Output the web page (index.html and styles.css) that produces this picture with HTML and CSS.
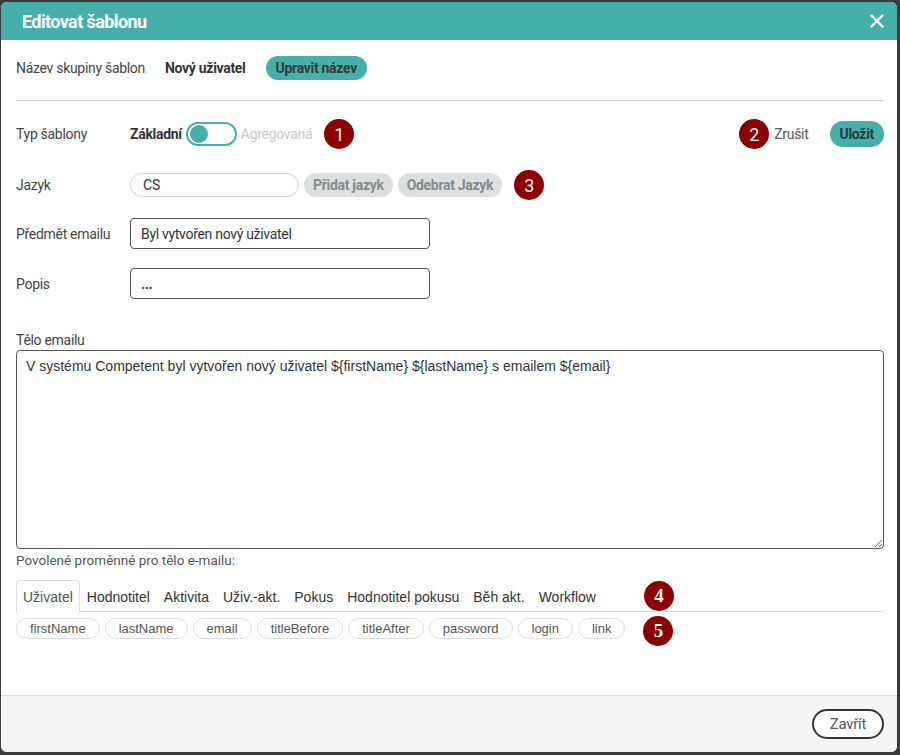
FILE: index.html
```html
<!DOCTYPE html>
<html lang="cs">
<head>
<meta charset="utf-8">
<title>Editovat šablonu</title>
<link rel="stylesheet" href="styles.css">
</head>
<body>
<div class="modal">
  <div class="modal-header">
    <h1 class="modal-title">Editovat šablonu</h1>
    <button class="close-btn" aria-label="Zavřít">
      <svg width="14" height="14" viewBox="0 0 14 14"><path d="M1.5 1.5 L12.5 12.5 M12.5 1.5 L1.5 12.5" stroke="#fff" stroke-width="2.4" stroke-linecap="round"/></svg>
    </button>
  </div>
  <div class="modal-body">
    <div class="row row-name">
      <span class="label-inline">Název skupiny šablon</span>
      <span class="name-value">Nový uživatel</span>
      <button class="btn-teal">Upravit název</button>
    </div>
    <div class="divider"></div>
    <div class="row row-type">
      <span class="label">Typ šablony</span>
      <span class="type-on">Základní</span>
      <span class="toggle"><span class="knob"></span></span>
      <span class="type-off">Agregovaná</span>
      <span class="badge badge-1">1</span>
      <div class="actions">
        <span class="badge">2</span>
        <span class="link-cancel">Zrušit</span>
        <button class="btn-teal btn-save">Uložit</button>
      </div>
    </div>
    <div class="row row-lang">
      <span class="label">Jazyk</span>
      <input class="pill-input" value="CS">
      <button class="btn-gray">Přidat jazyk</button>
      <button class="btn-gray">Odebrat Jazyk</button>
      <span class="badge badge-3">3</span>
    </div>
    <div class="row row-field row-subject">
      <span class="label">Předmět emailu</span>
      <input class="text-input" value="Byl vytvořen nový uživatel">
    </div>
    <div class="row row-field row-desc">
      <span class="label">Popis</span>
      <input class="text-input bold" value="...">
    </div>
    <div class="body-label">Tělo emailu</div>
    <textarea class="body-text">V systému Competent byl vytvořen nový uživatel ${firstName} ${lastName} s emailem ${email}</textarea>
    <div class="vars-label">Povolené proměnné pro tělo e-mailu:</div>
    <div class="tabs">
      <span class="tab active">Uživatel</span>
      <span class="tab">Hodnotitel</span>
      <span class="tab">Aktivita</span>
      <span class="tab">Uživ.-akt.</span>
      <span class="tab">Pokus</span>
      <span class="tab">Hodnotitel pokusu</span>
      <span class="tab">Běh akt.</span>
      <span class="tab">Workflow</span>
      <span class="badge badge-serif badge-4">4</span>
    </div>
    <div class="chips">
      <span class="chip">firstName</span>
      <span class="chip">lastName</span>
      <span class="chip">email</span>
      <span class="chip">titleBefore</span>
      <span class="chip">titleAfter</span>
      <span class="chip">password</span>
      <span class="chip">login</span>
      <span class="chip">link</span>
      <span class="badge badge-serif badge-5">5</span>
    </div>
  </div>
  <div class="modal-footer">
    <button class="btn-outline">Zavřít</button>
  </div>
</div>
</body>
</html>
```
FILE: styles.css
```css
* { box-sizing: border-box; }
html, body { height: 100%; }
body {
  margin: 0;
  background: #3a3d3d;
  padding: 2px 3px 3px 1px;
  font-family: Roboto, "Noto Sans", sans-serif;
  font-size: 14px;
  letter-spacing: -0.3px;
  color: #444;
}
button { font-family: inherit; letter-spacing: inherit; cursor: pointer; }
.modal {
  width: 896px;
  height: 750px;
  background: #fff;
  border-radius: 6px;
  display: flex;
  flex-direction: column;
  overflow: hidden;
}
.modal-header {
  height: 38px;
  flex: none;
  background: #45b0aa;
  display: flex;
  align-items: center;
  justify-content: space-between;
  padding: 0 13px 0 21px;
}
.modal-title {
  margin: 0;
  font-size: 18px;
  font-weight: 700;
  color: #fff;
  letter-spacing: -0.6px;
}
.close-btn {
  background: none;
  border: 0;
  padding: 0;
  width: 14px;
  height: 14px;
  display: flex;
}
.modal-body {
  flex: 1;
  padding: 16px 13px 0 15px;
}
.row { display: flex; align-items: center; }
.label { width: 114px; flex: none; color: #444; }
.row-name { height: 24px; }
.label-inline { color: #444; }
.name-value { margin-left: 20px; font-weight: 700; color: #333; }
.btn-teal {
  margin-left: 20px;
  height: 24px;
  padding: 0 10px;
  background: #45b0aa;
  border: 0;
  border-radius: 12px;
  font-weight: 700;
  font-size: 14px;
  color: #2f3a3a;
}
.divider {
  height: 1px;
  background: #d0d0d0;
  margin: 20px 0 21px;
}
.row-type { height: 24px; }
.type-on { font-weight: 700; color: #333; }
.toggle {
  width: 51px;
  height: 24px;
  margin: 0 4px;
  border: 2px solid #45b0aa;
  border-radius: 12px;
  display: flex;
  align-items: center;
  padding-left: 2px;
}
.knob {
  width: 18px;
  height: 18px;
  border-radius: 50%;
  background: #45b0aa;
}
.type-off { color: #c8c8c8; }
.badge {
  width: 30px;
  height: 30px;
  flex: none;
  border-radius: 50%;
  background: #8b0000;
  color: #fff;
  font-size: 18px;
  letter-spacing: 0;
  display: flex;
  align-items: center;
  justify-content: center;
}
.badge-1 { margin-left: 12px; }
.badge-serif {
  font-family: "Liberation Serif", "DejaVu Serif", serif;
  font-weight: 700;
  font-size: 19px;
}
.actions {
  margin-left: auto;
  display: flex;
  align-items: center;
}
.link-cancel { margin-left: 5px; color: #555; }
.btn-save { margin-left: 21px; height: 26px; padding: 0 10px; border-radius: 13px; }
.row-lang { height: 24px; margin-top: 27px; }
.pill-input {
  width: 169px;
  height: 24px;
  border: 1px solid #cfcfcf;
  border-radius: 12px;
  padding: 0 12px;
  font-family: inherit;
  font-size: 14px;
  color: #333;
  outline: none;
}
.btn-gray {
  margin-left: 5px;
  height: 24px;
  padding: 0 9px;
  border: 0;
  border-radius: 12px;
  background: #dde0e0;
  color: #858a8a;
  font-weight: 700;
  font-size: 14px;
}
.badge-3 { margin-left: 12px; }
.row-field { height: 31px; }
.row-subject { margin-top: 21px; }
.row-desc { margin-top: 19px; }
.text-input {
  width: 300px;
  height: 31px;
  border: 1px solid #555;
  border-radius: 4px;
  padding: 0 10px;
  font-family: inherit;
  font-size: 14px;
  letter-spacing: -0.3px;
  color: #333;
  outline: none;
}
.text-input.bold { font-weight: 700; }
.body-label {
  margin-top: 32px;
  line-height: 19px;
  color: #444;
}
.body-text {
  display: block;
  width: 100%;
  height: 199px;
  border: 1px solid #555;
  border-radius: 4px;
  padding: 7px 9px;
  font-family: "Liberation Sans", Arial, sans-serif;
  font-size: 14px;
  letter-spacing: 0;
  color: #333;
  resize: vertical;
  outline: none;
}
.vars-label {
  margin-top: 1px;
  line-height: 20px;
  font-size: 13.5px;
  letter-spacing: 0;
  color: #555;
}
.tabs {
  margin-top: 10px;
  height: 32px;
  border-bottom: 1px solid #ddd;
  display: flex;
  align-items: center;
  font-family: "Liberation Sans", Arial, sans-serif;
  font-size: 14px;
  letter-spacing: 0;
  color: #333;
}
.tab {
  height: 31px;
  display: flex;
  align-items: center;
  padding: 2px 6px 0;
  border: 1px solid transparent;
  border-bottom: 0;
}
.tab.active {
  color: #555;
  border-color: #ddd;
  border-radius: 4px 4px 0 0;
  background: #fff;
  height: 32px;
  margin-bottom: -1px;
  padding-top: 1px;
}
.badge-4 { margin-left: 41px; }
.chips {
  margin-top: 6px;
  display: flex;
  align-items: flex-start;
  gap: 5px;
  font-family: "Liberation Sans", Arial, sans-serif;
  font-size: 13px;
  letter-spacing: 0;
  color: #555;
}
.chip {
  height: 21px;
  padding: 0 13px;
  border: 1px solid #ddd;
  border-radius: 11px;
  display: flex;
  align-items: center;
}
.badge-5 { margin-left: 13px; margin-top: -2px; }
.modal-footer {
  height: 57px;
  flex: none;
  border-top: 1px solid #ddd;
  background: #f5f5f5;
  display: flex;
  align-items: center;
  justify-content: flex-end;
  padding: 0 13px 0 0;
}
.btn-outline {
  height: 30px;
  padding: 0 16px;
  border: 2px solid #2f3b3b;
  border-radius: 15px;
  background: #fff;
  color: #555;
  font-size: 15px;
}
```
